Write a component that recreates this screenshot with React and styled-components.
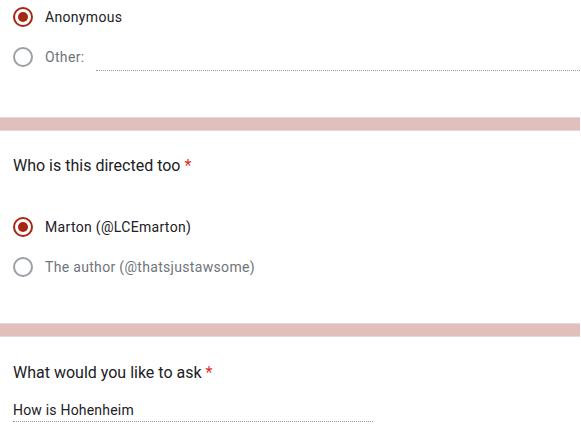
import React from "react";
import styled, { createGlobalStyle } from "styled-components";

const GlobalStyle = createGlobalStyle`
  body {
    margin: 0;
    background: #ffffff;
    font-family: Roboto, "Liberation Sans", Arial, sans-serif;
  }
`;

const Page = styled.div`
  width: 580px;
  background: #e1bfbb;
  display: flex;
  flex-direction: column;
  gap: 12px;
`;

const Card = styled.div`
  background: #ffffff;
  border-top: ${(p) => (p.$first ? "none" : "1px solid #dadce0")};
  border-bottom: 1px solid #dadce0;
  padding: ${(p) => p.$pad};
  display: flex;
  flex-direction: column;
`;

const Title = styled.div`
  font-size: 16px;
  line-height: 24px;
  color: #202124;
  letter-spacing: 0;
`;

const Star = styled.span`
  color: #d93025;
  margin-left: 4px;
`;

const Options = styled.div`
  display: flex;
  flex-direction: column;
  gap: 20px;
  margin-top: ${(p) => p.$top || "0px"};
`;

const Option = styled.div`
  display: flex;
  align-items: center;
  height: 20px;
`;

const Radio = styled.span`
  box-sizing: border-box;
  width: 20px;
  height: 20px;
  border-radius: 50%;
  border: 2px solid ${(p) => (p.$checked ? "#a52714" : "#9aa0a6")};
  display: flex;
  align-items: center;
  justify-content: center;
  flex-shrink: 0;
  &::after {
    content: "";
    width: 10px;
    height: 10px;
    border-radius: 50%;
    background: ${(p) => (p.$checked ? "#a52714" : "transparent")};
  }
`;

const Label = styled.span`
  margin-left: 12px;
  font-size: 14px;
  line-height: 20px;
  color: ${(p) => (p.$muted ? "#70757a" : "#202124")};
  letter-spacing: 0.32px;
`;

const OtherInput = styled.span`
  flex: 1;
  align-self: flex-end;
  height: 20px;
  margin-left: 12px;
  margin-bottom: -4px;
  border-bottom: 1px dotted #9e9e9e;
`;

const Answer = styled.div`
  width: 360px;
  margin-top: 15px;
  font-size: 14px;
  line-height: 20px;
  color: #202124;
  padding-bottom: 1px;
  border-bottom: 1px dotted #9e9e9e;
  letter-spacing: 0.2px;
`;

const App = () => {
  return (
    <>
      <GlobalStyle />
      <Page>
        <Card $first $pad="7px 0 50px 13px">
          <Options>
            <Option>
              <Radio $checked />
              <Label>Anonymous</Label>
            </Option>
            <Option>
              <Radio />
              <Label $muted>Other:</Label>
              <OtherInput />
            </Option>
          </Options>
        </Card>
        <Card $pad="23px 0 46px 13px">
          <Title>
            Who is this directed too<Star>*</Star>
          </Title>
          <Options $top="39px">
            <Option>
              <Radio $checked />
              <Label>Marton (@LCEmarton)</Label>
            </Option>
            <Option>
              <Radio />
              <Label $muted>The author (@thatsjustawsome)</Label>
            </Option>
          </Options>
        </Card>
        <Card $pad="24px 0 40px 13px">
          <Title>
            What would you like to ask<Star>*</Star>
          </Title>
          <Answer>How is Hohenheim</Answer>
        </Card>
      </Page>
    </>
  );
};

export default App;
